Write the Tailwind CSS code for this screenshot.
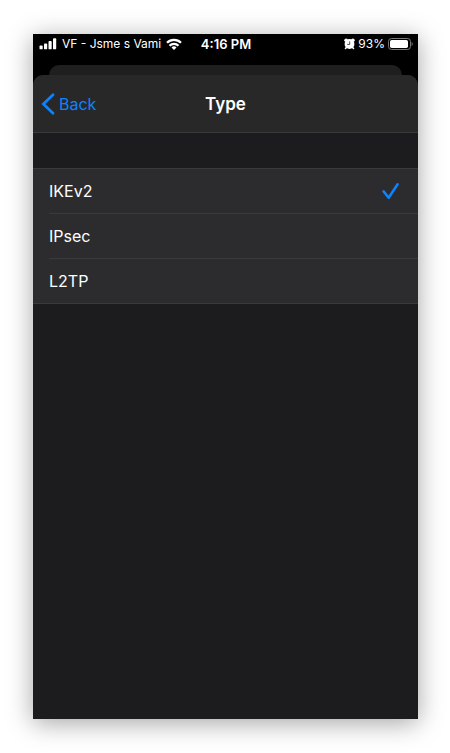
<!DOCTYPE html>
<html lang="en">
<head>
    <meta charset="UTF-8">
    <meta name="viewport" content="width=device-width, initial-scale=1.0">
    <title>Type</title>
    <script src="https://cdn.jsdelivr.net/npm/@tailwindcss/browser@4"></script>
</head>
<body class="bg-white font-['Inter',sans-serif]">

    <div class="flex min-h-screen pt-[34px] pb-[34px] pl-[33px] pr-8">
        <div class="flex flex-1 flex-col bg-black text-white shadow-[0_4px_24px_rgba(0,0,0,0.36)]">

            <!-- Status bar -->
            <div class="grid grid-cols-[1fr_auto_1fr] items-center h-5 pl-[6px] pr-[5px] text-xs leading-4 whitespace-nowrap">
                <div class="flex items-center gap-[5px]">
                    <svg class="w-[18px] h-3" viewBox="0 0 18 12" fill="#fff">
                        <rect x="0.5" y="7.5" width="3.2" height="3.8" rx="0.9"/>
                        <rect x="5" y="5.5" width="3.2" height="5.8" rx="0.9"/>
                        <rect x="9.5" y="3" width="3.2" height="8.3" rx="0.9"/>
                        <rect x="14" y="0.3" width="3.2" height="11" rx="0.9"/>
                    </svg>
                    <span>VF - Jsme s Vami</span>
                    <svg class="w-4 h-3" viewBox="0 0 16 12" fill="none" stroke="#fff" stroke-width="2.3">
                        <path d="M1 4.8a10 10 0 0 1 14 0"/>
                        <path d="M3.5 7.7a6.4 6.4 0 0 1 9 0"/>
                        <path d="M8 12 5.5 9.5a3.6 3.6 0 0 1 5 0z" fill="#fff" stroke="none"/>
                    </svg>
                </div>
                <span class="text-[13px] font-semibold">4:16 PM</span>
                <div class="flex items-center justify-end gap-[3px]">
                    <svg class="w-[11px] h-3" viewBox="0 0 11 12">
                        <circle cx="2.1" cy="2.3" r="1.8" fill="#fff"/>
                        <circle cx="8.9" cy="2.3" r="1.8" fill="#fff"/>
                        <path d="M2.6 9.2 1.5 10.5M8.4 9.2 9.5 10.5" stroke="#fff" stroke-width="1.6" stroke-linecap="round"/>
                        <circle cx="5.5" cy="6" r="4.9" fill="#fff"/>
                        <path d="M5.7 3.4v3H3.2" fill="none" stroke="#222" stroke-width="0.8"/>
                    </svg>
                    <span>93%</span>
                    <svg class="w-[25px] h-3" viewBox="0 0 25 12">
                        <rect x="0.5" y="0.5" width="22" height="11" rx="3" fill="none" stroke="#777"/>
                        <rect x="2" y="2" width="18" height="8" rx="1.7" fill="#fff"/>
                        <path d="M23.6 4v4c1.5-.7 1.5-3.3 0-4z" fill="#777"/>
                    </svg>
                </div>
            </div>

            <!-- Edge of the card behind the sheet -->
            <div class="mt-[11px] mx-4 h-[10px] rounded-t-[10px] bg-[#1f1f20]"></div>

            <!-- Sheet -->
            <div class="flex flex-1 flex-col rounded-t-[10px] bg-[#1c1c1e] text-base leading-6">
                <header class="grid grid-cols-[1fr_auto_1fr] items-center h-[58px] px-2 rounded-t-[10px] border-b border-[#3a3a3c] bg-[#282829]">
                    <button type="button" class="flex items-center gap-1 justify-self-start text-[#0a84ff]">
                        <svg class="w-[14px] h-[22px]" viewBox="0 0 14 22" fill="none" stroke="currentColor" stroke-width="2.7" stroke-linecap="round">
                            <path d="M12 1.7 2.4 11l9.6 9.3"/>
                        </svg>
                        Back
                    </button>
                    <h1 class="text-[17px] font-semibold">Type</h1>
                </header>

                <main class="pt-[35px]">
                    <div role="radiogroup" aria-label="Type" class="border-y border-[#3a3a3c] bg-[#2c2c2e]">
                        <label class="flex pl-4">
                            <input type="radio" name="type" value="ikev2" class="peer appearance-none" checked>
                            <span class="flex flex-1 items-center h-[45px] border-b border-[#3a3a3c]">IKEv2</span>
                            <span class="flex items-center h-[45px] pr-[18px] border-b border-[#3a3a3c] text-[#0a84ff] *:invisible peer-checked:*:visible">
                                <svg class="w-[18px] h-[18px]" viewBox="0 0 18 18" fill="none" stroke="currentColor" stroke-width="2.5" stroke-linecap="round" stroke-linejoin="round">
                                    <path d="M1.6 9.4 6.7 15.8 15.6 2.2"/>
                                </svg>
                            </span>
                        </label>
                        <label class="flex pl-4">
                            <input type="radio" name="type" value="ipsec" class="peer appearance-none">
                            <span class="flex flex-1 items-center h-[45px] border-b border-[#3a3a3c]">IPsec</span>
                            <span class="flex items-center h-[45px] pr-[18px] border-b border-[#3a3a3c] text-[#0a84ff] *:invisible peer-checked:*:visible">
                                <svg class="w-[18px] h-[18px]" viewBox="0 0 18 18" fill="none" stroke="currentColor" stroke-width="2.5" stroke-linecap="round" stroke-linejoin="round">
                                    <path d="M1.6 9.4 6.7 15.8 15.6 2.2"/>
                                </svg>
                            </span>
                        </label>
                        <label class="flex pl-4">
                            <input type="radio" name="type" value="l2tp" class="peer appearance-none">
                            <span class="flex flex-1 items-center h-11">L2TP</span>
                            <span class="flex items-center h-11 pr-[18px] text-[#0a84ff] *:invisible peer-checked:*:visible">
                                <svg class="w-[18px] h-[18px]" viewBox="0 0 18 18" fill="none" stroke="currentColor" stroke-width="2.5" stroke-linecap="round" stroke-linejoin="round">
                                    <path d="M1.6 9.4 6.7 15.8 15.6 2.2"/>
                                </svg>
                            </span>
                        </label>
                    </div>
                </main>
            </div>
        </div>
    </div>

</body>
</html>
